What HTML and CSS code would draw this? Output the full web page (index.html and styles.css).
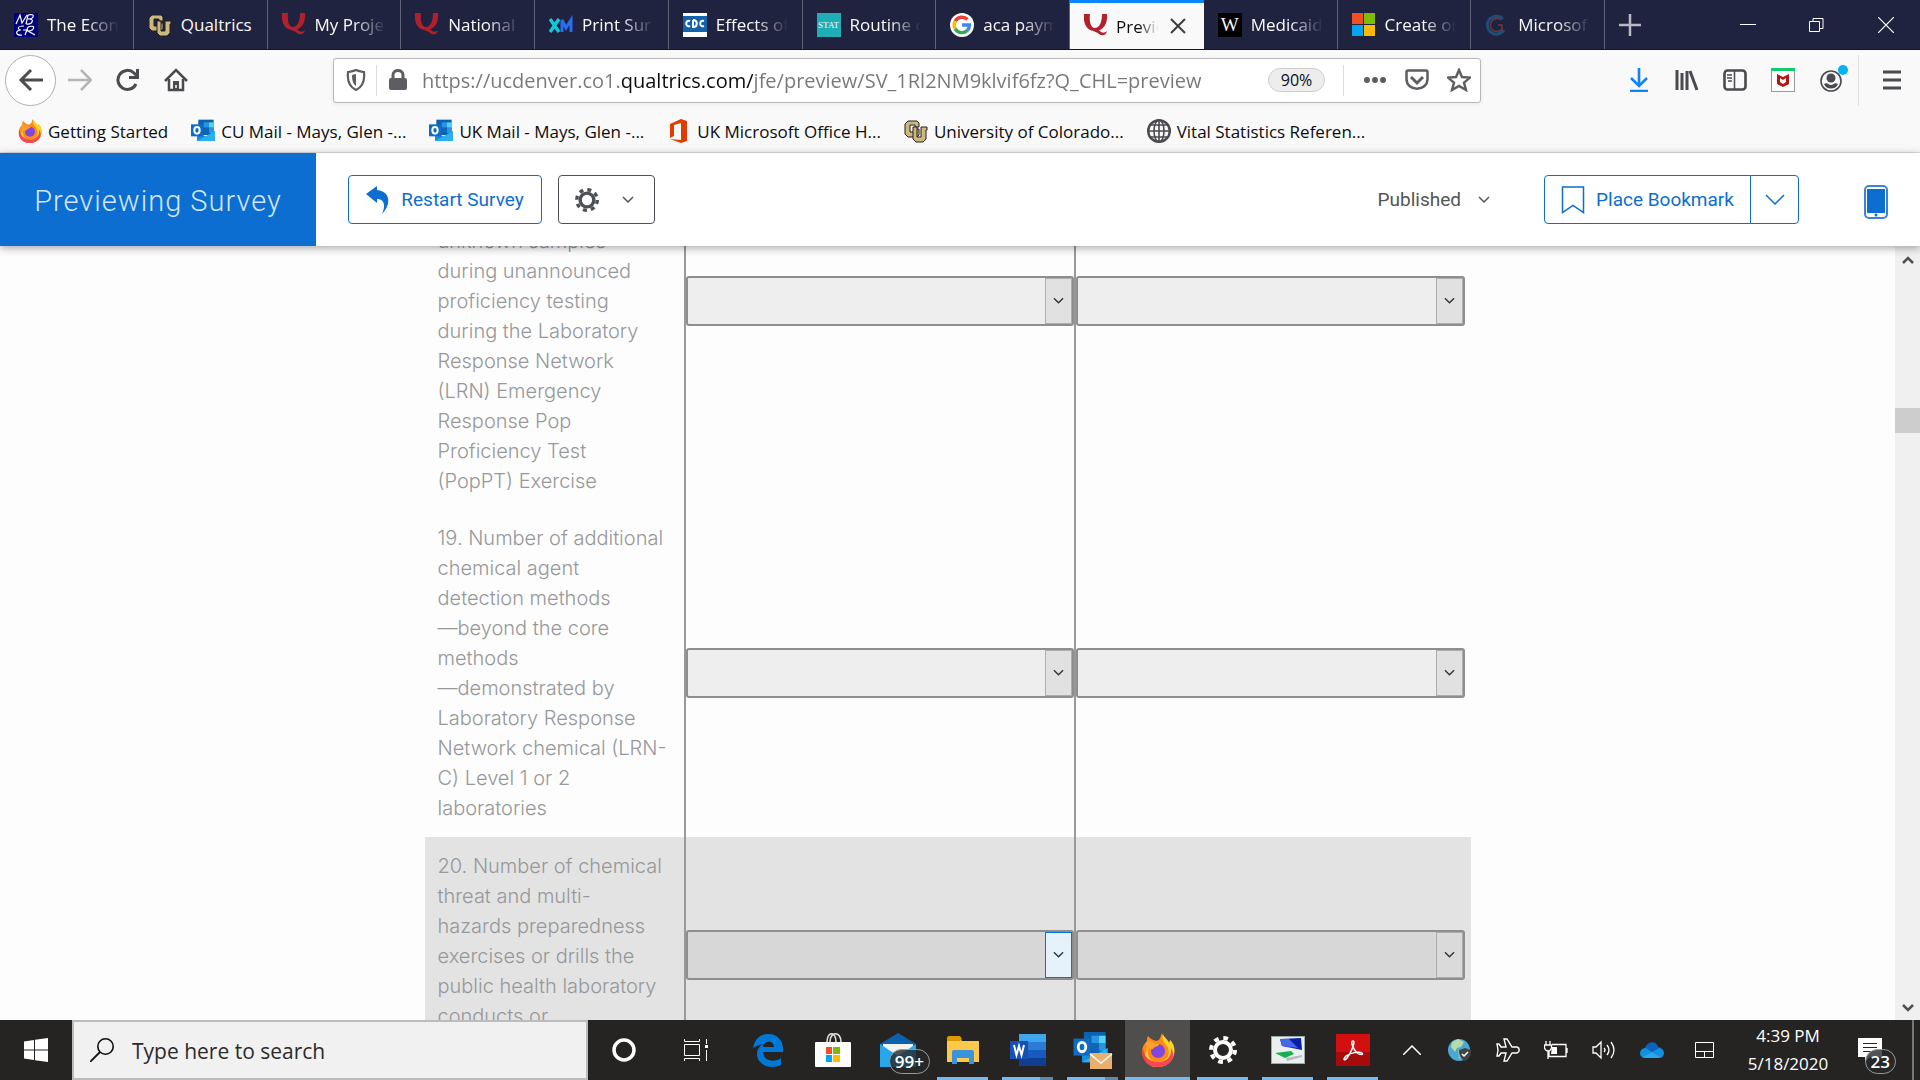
FILE: index.html
```
<!DOCTYPE html>
<html lang="en">
<head>
  <meta charset="UTF-8" />
  <meta name="viewport" content="width=device-width, initial-scale=1.0"/>
  <title>Preview - Online Survey Software</title>
  <link rel="stylesheet" href="styles.css">
</head>

<body>
  <!-- shared shapes -->
  <svg class="defs" aria-hidden="true">
    <symbol id="q-logo" viewBox="0 0 24 24">
      <path d="M0 0h6c-1 8 1 14 5 14s7-5 7-14h5c1 10-4 17-12 17S-1 10 0 0z" fill="#b2202c"/>
      <path d="M9 17c3-4 6-1 8 1 2 1 4 1 6-1-1 5-5 5-8 3-2-2-4-2-6-3z" fill="#b2202c"/>
    </symbol>
    <symbol id="cu-logo" viewBox="0 0 24 24">
      <path d="M4 2h9l2 2v4h-4V6H6v7h5v-3h4v6l-2 2H4l-3-3V5z" fill="#cfb87c" stroke="#222" stroke-width="1"/>
      <path d="M9 8h4v10h4V8h6v3h-1v9l-3 3h-7l-3-3z" fill="#cfb87c" stroke="#222" stroke-width="1"/>
    </symbol>
    <symbol id="outlook-logo" viewBox="0 0 36 36">
      <path d="M11 1h23v23H11z" fill="#0a63b0"/>
      <path d="M19 5h8v8h-8z" fill="#2896df"/><path d="M27 5h7v8h-7z" fill="#54d1fb"/>
      <path d="M19 13h8v8h-8z" fill="#1066b5"/><path d="M27 13h7v8h-7z" fill="#2896df"/>
      <path d="M9 18l14 9 13-9v15H9z" fill="#1a8cdc"/><path d="M9 33l27-15v15z" fill="#2bb0ee"/>
      <rect y="8" width="18" height="18" fill="#0f6cc6"/>
      <ellipse cx="9" cy="17" rx="4" ry="5" fill="none" stroke="#fff" stroke-width="3"/>
    </symbol>
    <symbol id="firefox-logo" viewBox="0 0 34 34">
      <path d="M21 0c-2 4-1 7-6 8-4-1-6-3-8-5-1 2-1 3-1 5-9 8-6 25 11 26 18-1 20-20 12-27l-1 4C28 6 22 5 21 0z" fill="#ff8a16"/>
      <path d="M22 1c-2 6 1 8 4 12 5 8-1 16-9 16-9 0-11-8-10-12-6 4-4 15 7 17 19 2 24-19 15-27l-1 4C28 7 23 5 22 1z" fill="#ffd32a"/>
      <path d="M2 15c1 9 7 14 15 14s14-5 13-14c6 9-1 19-13 19S-1 25 2 15z" fill="#f5245f" opacity=".8"/>
      <circle cx="17" cy="18" r="7" fill="#8046e0"/>
      <path d="M5 9c4-2 7 0 9 2h4c0 3-5 2-6 5-3 0-6 1-7 3z" fill="#ffa02a"/>
    </symbol>
    <symbol id="chevron" viewBox="0 0 12 8">
      <path d="M1 1l5 5 5-5" fill="none" stroke="currentColor" stroke-width="1.5"/>
    </symbol>
    <symbol id="gear" viewBox="0 0 28 28">
      <circle cx="14" cy="14" r="8" fill="none" stroke="currentColor" stroke-width="4"/>
      <circle cx="14" cy="14" r="12" fill="none" stroke="currentColor" stroke-width="4" stroke-dasharray="4.7 4.72"/>
    </symbol>
    <symbol id="globe" viewBox="0 0 24 24">
      <g fill="none" stroke="#4a4a4f" stroke-width="1.6"><circle cx="12" cy="12" r="10.8" stroke-width="2.4"/><ellipse cx="12" cy="12" rx="5" ry="11"/><path d="M12 1v22M1 12h22M3 6h18M3 18h18"/></g>
    </symbol>
  </svg>

  <header class="browser">
    <div class="tabs">
      <div class="tab-list" role="tablist">
        <button class="tab" role="tab"><svg class="fav" viewBox="0 0 24 24"><rect width="24" height="24" fill="#00007d"/><path d="M2 11L6 2l2 8 5-8M14 2l-2 9M14 2c8-2 6 4 0 4 7-1 5 6-2 5M10 13c-8 0-6 4-3 4-6 0-6 6 1 5M14 14l-3 8M14 14c9-3 6 4 0 4l7 4M9 17h5" fill="none" stroke="#fff" stroke-width="1.2"/></svg><span>The Econ</span></button>
        <button class="tab" role="tab"><svg class="fav"><use href="#cu-logo"/></svg><span class="whole">Qualtrics</span></button>
        <button class="tab" role="tab"><svg class="fav"><use href="#q-logo"/></svg><span>My Proje</span></button>
        <button class="tab" role="tab"><svg class="fav"><use href="#q-logo"/></svg><span>National</span></button>
        <button class="tab" role="tab"><svg class="fav" viewBox="0 0 24 24"><path d="M1 6l9 13M10 6L1 19" stroke="#12c9d6" stroke-width="3.4"/><path d="M13 19V7l4 8 5-8v12" fill="none" stroke="#2b6cf0" stroke-width="3"/></svg><span>Print Sur</span></button>
        <button class="tab" role="tab"><svg class="fav" viewBox="0 0 24 24"><rect width="24" height="24" fill="#fff"/><rect y="3" width="24" height="16" fill="#1463a8"/><path d="M7 8c-5-2-5 7 0 5M10 7v7c5 0 5-7 0-7M21 8c-5-2-5 7 0 5" fill="none" stroke="#fff" stroke-width="2"/></svg><span>Effects of</span></button>
        <button class="tab" role="tab"><i class="fav stat">STAT</i><span>Routine c</span></button>
        <button class="tab" role="tab"><svg class="fav" viewBox="0 0 24 24"><circle cx="12" cy="12" r="12" fill="#fff"/><g fill="none" stroke-width="3.4"><path d="M17.500 6.500A7.800 7.800 0 0 0 5.200 8.200" stroke="#ea4335"/><path d="M5.200 8.200a7.800 7.800 0 0 0 0 7.600" stroke="#fbbc05"/><path d="M5.200 15.800a7.800 7.800 0 0 0 12 1.800" stroke="#34a853"/><path d="M17.200 17.600A7.800 7.800 0 0 0 19.500 12H12" stroke="#4285f4"/></g></svg><span>aca paym</span></button>
        <button class="tab active" role="tab" aria-selected="true"><svg class="fav"><use href="#q-logo"/></svg><span>Previe</span><svg class="close" viewBox="0 0 16 16"><path d="M1 1l14 14M15 1L1 15" stroke="#3c3c40" stroke-width="2"/></svg></button>
        <button class="tab" role="tab"><i class="fav wiki">W</i><span>Medicaid</span></button>
        <button class="tab" role="tab"><svg class="fav" viewBox="0 0 24 24"><path d="M0 0h11v11H0z" fill="#f35022"/><path d="M12 0h11v11H12z" fill="#80bb03"/><path d="M0 12h11v11H0z" fill="#03a5f0"/><path d="M12 12h11v11H12z" fill="#ffb903"/></svg><span>Create or</span></button>
        <button class="tab" role="tab"><svg class="fav" viewBox="0 0 24 24"><path d="M18 6a9 9 0 1 0 1 11" fill="none" stroke="#1d4d79" stroke-width="3"/><path d="M16 7a6.500 6.500 0 1 0 1 9v-4h-4" fill="none" stroke="#733638" stroke-width="1.500"/></svg><span>Microsof</span></button>
      </div>
      <button class="new-tab" aria-label="New tab"><svg width="22" height="22" viewBox="0 0 22 22"><path d="M11 0v22M0 11h22" stroke="#b9b9c2" stroke-width="2.5"/></svg></button>
      <div class="window-buttons">
        <button aria-label="Minimize"><svg width="16" height="16"><path d="M0 7.500h16" stroke="#fff"/></svg></button>
        <button aria-label="Restore"><svg width="16" height="16" fill="none" stroke="#fff"><path d="M.5 4.500h10v10H.5zM4 4V1.500h10v10h-3"/></svg></button>
        <button aria-label="Close"><svg width="16" height="16"><path d="M0 0l16 16M16 0L0 16" stroke="#fff" stroke-width="1.200"/></svg></button>
      </div>
    </div>

    <div class="toolbar">
      <div class="nav-buttons">
        <button class="back" aria-label="Back"><svg width="26" height="24" viewBox="0 0 26 24"><path d="M25 12H3M13 2L3 12l10 10" fill="none" stroke="#4a4a4f" stroke-width="3"/></svg></button>
        <button aria-label="Forward"><svg width="24" height="22" viewBox="0 0 24 22"><path d="M0 11h22M13 1l10 10-10 10" fill="none" stroke="#b5b5b8" stroke-width="2.500"/></svg></button>
        <button aria-label="Reload"><svg width="24" height="24" viewBox="0 0 24 24"><path d="M20 16A9.500 9.500 0 1 1 18 5l3 3" fill="none" stroke="#4a4a4f" stroke-width="3"/><path d="M23 1v10H13V8h7V1z" fill="#4a4a4f"/></svg></button>
        <button aria-label="Home"><svg width="24" height="24" viewBox="0 0 24 24"><path d="M1 13L12 2l11 11M5 11v11h14V11" fill="none" stroke="#4a4a4f" stroke-width="2.500"/><path d="M9 13h6v9H9z" fill="#4a4a4f"/><path d="M12 17v3" stroke="#fff" stroke-width="1.500"/></svg></button>
      </div>
      <div class="url-bar">
        <svg width="20" height="22" viewBox="0 0 20 22"><path d="M10 1c3 1 5 2 8 2 1 9-2 15-8 18C4 18 1 12 2 3c3 0 5-1 8-2z" fill="none" stroke="#5e5e62" stroke-width="2.200"/><path d="M10 5l-4 1c0 5 1 9 4 11z" fill="#5e5e62"/></svg>
        <i class="bar"></i>
        <svg width="18" height="22" viewBox="0 0 18 22"><path d="M4 11V6c0-6 10-6 10 0v5" fill="none" stroke="#5e5e62" stroke-width="3"/><rect y="9" width="18" height="12" rx="2" fill="#5e5e62"/></svg>
        <input class="url" type="text" aria-label="Address" value="https://ucdenver.co1.qualtrics.com/jfe/preview/SV_1Rl2NM9klvif6fz?Q_CHL=preview">
        <button class="zoom">90%</button>
        <i class="bar"></i>
        <button aria-label="Page actions"><svg width="24" height="8"><g fill="#5e5e62"><circle cx="4" cy="4" r="3"/><circle cx="12" cy="4" r="3"/><circle cx="20" cy="4" r="3"/></g></svg></button>
        <button aria-label="Save to Pocket"><svg width="24" height="22" viewBox="0 0 24 22"><path d="M3 1.500h18q1.500 0 1.500 1.500v7c0 13-21 13-21 0V3q0-1.500 1.500-1.500z" fill="none" stroke="#5e5e62" stroke-width="2.500"/><path d="M6 8l6 6 6-6" fill="none" stroke="#5e5e62" stroke-width="3"/></svg></button>
        <button aria-label="Bookmark this page"><svg width="24" height="24" viewBox="0 0 24 24"><path d="M12 2l3 7 8 .6-6 5 2 7.400-7-4-7 4 2-7.400-6-5L9 9z" fill="none" stroke="#5e5e62" stroke-width="2.400"/></svg></button>
      </div>
      <div class="tools">
        <button aria-label="Downloads"><svg width="24" height="24" viewBox="0 0 24 24"><path d="M12 0v17M4 10l8 8 8-8M3 23h18" fill="none" stroke="#0a84ff" stroke-width="2.600"/></svg></button>
        <button aria-label="Library"><svg width="24" height="22" viewBox="0 0 24 22"><path d="M2 1v20M7 4v17M12 2v19M15 2l7 19" fill="none" stroke="#4a4a4f" stroke-width="3"/></svg></button>
        <button aria-label="Sidebars"><svg width="24" height="22" viewBox="0 0 24 22"><rect x="1.500" y="1.500" width="21" height="19" rx="3" fill="none" stroke="#4a4a4f" stroke-width="2.600"/><path d="M11.500 2v18M4 6h5M4 9h5M5 12h4" stroke="#4a4a4f" stroke-width="1.500"/></svg></button>
        <button aria-label="McAfee"><svg width="24" height="24" viewBox="0 0 24 24"><rect x=".5" y=".5" width="23" height="23" fill="#fff" stroke="#999"/><path d="M0 0h24v3H0z" fill="#12cc6c"/><path d="M6 6l6 3 6-3v10l-6 3-6-3z" fill="#b71414"/><path d="M9 10l3 2 3-2v4l-3 2-3-2z" fill="#fff"/></svg></button>
        <button aria-label="Account"><svg width="30" height="30" viewBox="0 0 30 30"><circle cx="12" cy="16" r="10" fill="none" stroke="#4a4a4f" stroke-width="1.600"/><circle cx="12" cy="13" r="4.500" fill="#4a4a4f"/><path d="M5 19c4-2 4 1 7 1s3-3 7-1c-2 6-12 6-14 0z" fill="#4a4a4f"/><circle cx="24" cy="5" r="5" fill="#00b3f4"/></svg></button>
        <i class="bar tall"></i>
        <button aria-label="Menu"><svg width="18" height="20"><path d="M0 2h18M0 10h18M0 18h18" stroke="#4a4a4f" stroke-width="3"/></svg></button>
      </div>
    </div>

    <nav class="bookmarks">
      <a href="#"><svg width="24" height="24"><use href="#firefox-logo"/></svg>Getting Started</a>
      <a href="#"><svg width="24" height="24"><use href="#outlook-logo"/></svg>CU Mail - Mays, Glen -...</a>
      <a href="#"><svg width="24" height="24"><use href="#outlook-logo"/></svg>UK Mail - Mays, Glen -...</a>
      <a href="#"><svg width="24" height="24" viewBox="0 0 24 24"><path d="M3 5l11-5 6 2v20l-6 2-11-4 11 1V4L7 6v11l-4 2z" fill="#e13b00"/></svg>UK Microsoft Office H...</a>
      <a href="#"><svg width="24" height="24"><use href="#cu-logo"/></svg>University of Colorado...</a>
      <a href="#"><svg width="24" height="24"><use href="#globe"/></svg>Vital Statistics Referen...</a>
    </nav>
  </header>

  <div class="preview-bar">
    <h1>Previewing Survey</h1>
    <button class="btn restart"><svg width="24" height="28" viewBox="0 0 24 28"><path d="M0 8l11-8v4c13 1 15 14 5 24 4-9 2-15-5-15v4z" fill="#0b6ed0"/></svg>Restart Survey</button>
    <button class="btn settings" aria-label="Settings"><svg width="24" height="24"><use href="#gear"/></svg><svg width="12" height="8"><use href="#chevron"/></svg></button>
    <button class="published">Published <svg width="12" height="8"><use href="#chevron"/></svg></button>
    <div class="bookmark-group">
      <button class="btn"><svg width="24" height="28" viewBox="0 0 24 28"><path d="M1.500 1h21v25.500L12 19.500 1.500 26.500z" fill="none" stroke="#0b6ed0" stroke-width="1.500"/></svg>Place Bookmark</button>
      <button class="btn drop" aria-label="Bookmarks"><svg width="20" height="12"><path d="M1 1l9 9 9-9" fill="none" stroke="#0b6ed0" stroke-width="1.500"/></svg></button>
    </div>
    <button class="phone" aria-label="Mobile view"><svg width="24" height="34" viewBox="0 0 24 34"><rect x="1" y="1" width="22" height="32" rx="4" fill="#fff" stroke="#3b82dc" stroke-width="2"/><path d="M3 4h18v24H3z" fill="#0b6ed0"/><circle cx="12" cy="30" r="1.500" fill="#0b6ed0"/></svg></button>
  </div>

  <main class="page">
    <div class="survey">
      <table class="matrix">
        <tr class="tall-row">
          <th scope="row">unknown samples<br>during unannounced<br>proficiency testing<br>during the Laboratory<br>Response Network<br>(LRN) Emergency<br>Response Pop<br>Proficiency Test<br>(PopPT) Exercise</th>
          <td><div class="pick"><select aria-label="Item 18, first answer"><option></option></select><svg><use href="#chevron"/></svg></div></td>
          <td><div class="pick"><select aria-label="Item 18, second answer"><option></option></select><svg><use href="#chevron"/></svg></div></td>
        </tr>
        <tr>
          <th scope="row">19. Number of additional<br>chemical agent<br>detection methods<br>—beyond the core<br>methods<br>—demonstrated by<br>Laboratory Response<br>Network chemical (LRN-<br>C) Level 1 or 2<br>laboratories</th>
          <td><div class="pick"><select aria-label="Item 19, first answer"><option></option></select><svg><use href="#chevron"/></svg></div></td>
          <td><div class="pick"><select aria-label="Item 19, second answer"><option></option></select><svg><use href="#chevron"/></svg></div></td>
        </tr>
        <tr class="current">
          <th scope="row">20. Number of chemical<br>threat and multi-<br>hazards preparedness<br>exercises or drills the<br>public health laboratory<br>conducts or</th>
          <td><div class="pick hot"><select aria-label="Item 20, first answer"><option></option></select><svg><use href="#chevron"/></svg></div></td>
          <td><div class="pick"><select aria-label="Item 20, second answer"><option></option></select><svg><use href="#chevron"/></svg></div></td>
        </tr>
      </table>
    </div>
    <div class="scrollbar">
      <svg width="12" height="10"><path d="M1 8l5-5 5 5" fill="none" stroke="#505050" stroke-width="2.500"/></svg>
      <i></i>
      <svg class="down" width="12" height="10"><path d="M1 2l5 5 5-5" fill="none" stroke="#505050" stroke-width="2.500"/></svg>
    </div>
  </main>

  <footer class="taskbar">
    <button class="start" aria-label="Start"><svg width="24" height="24" viewBox="0 0 24 24" fill="#fff"><path d="M0 3.500l10-1.500v9.500H0zM11 1.800L24 0v11.500H11zM0 12.500h10V22L0 20.500zM11 12.500h13V24l-13-1.800z"/></svg></button>
    <label class="search">
      <svg width="24" height="24" viewBox="0 0 24 24"><circle cx="15.500" cy="8.500" r="7.700" fill="none" stroke="#111" stroke-width="1.600"/><path d="M10 14L0 24" stroke="#111" stroke-width="1.800"/></svg>
      <input type="text" aria-label="Search" placeholder="Type here to search">
    </label>
    <div class="sys">
      <button aria-label="Cortana"><svg width="24" height="24"><circle cx="12" cy="12" r="10" fill="none" stroke="#fff" stroke-width="3.500"/></svg></button>
      <button aria-label="Task View"><svg width="24" height="24" fill="none" stroke="#fff"><path d="M.5 6.500h15v11H.5zM.5 1v2.500h15V1M.5 23v-2.500h15V23M22.500 1v5M22.500 12v11"/><path d="M21 7h3v3h-3z" fill="#fff" stroke="none"/></svg></button>
    </div>
    <div class="apps">
      <button aria-label="Edge"><svg width="32" height="34" viewBox="0 0 32 34"><path d="M1 15C3 5 9 1 16 1c9 0 15 6 15 15v3H11c0 9 12 11 18 6v7c-10 5-24 0-24-11 0-5 3-8 6-10-4 1-7 2-10 4zm10-1h11c0-7-10-7-11 0z" fill="#0078d7"/></svg></button>
      <button aria-label="Microsoft Store"><svg width="36" height="34" viewBox="0 0 36 34"><path d="M12 9C12-2 21-2 21 9M15 9c0-11 11-11 11 0" fill="none" stroke="#ddd" stroke-width="1.600"/><rect y="9" width="36" height="25" rx="1" fill="#fff"/><path d="M11 14h6v7h-6z" fill="#f35022"/><path d="M18 14h7v7h-7z" fill="#80bb03"/><path d="M11 22h6v7h-6z" fill="#03a5f0"/><path d="M18 22h7v7h-7z" fill="#ffb903"/></svg></button>
      <button class="mail" aria-label="Mail"><svg width="36" height="34" viewBox="0 0 36 34"><path d="M0 11L18 0l18 11v5H0z" fill="#0c60ae"/><path d="M3 11h30v12H3z" fill="#f2f2f2"/><path d="M0 11l18 12L36 11v23H0z" fill="#28a8ea"/></svg><b class="badge">99+</b></button>
      <button class="open" aria-label="File Explorer"><svg width="32" height="28" viewBox="0 0 32 28"><path d="M0 2h13l2 3h17v21H0z" fill="#fdc94a"/><path d="M0 2q0-2 2-2h11l2 3-2 2H0z" fill="#dc9a00"/><path d="M5 28V16q0-2 2-2h18q2 0 2 2v12h-5v-6H10v6z" fill="#3b93dc"/></svg></button>
      <button class="open many" aria-label="Word"><svg width="36" height="32" viewBox="0 0 36 32"><path d="M9 0h27v8H9z" fill="#41a5ee"/><path d="M9 8h27v8H9z" fill="#2b7cd3"/><path d="M9 16h27v8H9z" fill="#185abd"/><path d="M9 24h27v8H9z" fill="#103f91"/><rect y="7" width="18" height="18" fill="#1650b5"/><path d="M4 11l2.500 10L9 12l2.500 9L14 11" fill="none" stroke="#fff" stroke-width="2"/></svg></button>
      <button class="open many" aria-label="Outlook"><svg width="40" height="38" viewBox="0 0 40 38"><use href="#outlook-logo" width="35" height="34"/><path d="M17 22h22v16H17z" fill="#e8b06c"/><path d="M17 23l11 9 11-9" fill="none" stroke="#fff" stroke-width="1.500"/></svg></button>
      <button class="open focused" aria-label="Firefox"><svg width="34" height="34"><use href="#firefox-logo"/></svg></button>
      <button class="open" aria-label="Settings"><svg width="28" height="28" color="#fff"><use href="#gear"/></svg></button>
      <button class="open" aria-label="Remote desktop"><svg width="34" height="28" viewBox="0 0 34 28"><rect x=".5" y=".5" width="33" height="27" fill="#eceff0" stroke="#9aa"/><path d="M9 3l21-1 1 12-20-4z" fill="#0a1eac"/><path d="M9 3h9l9 9-16-2z" fill="#4468e6"/><path d="M4 17l16-2 3 3-9 4z" fill="#17b04e"/><path d="M15 22l16-3v2l-15 4z" fill="#b5bdc0"/></svg></button>
      <button class="open" aria-label="Acrobat Reader"><svg width="34" height="32" viewBox="0 0 34 32"><rect width="34" height="32" fill="#d30f0f"/><path d="M0 18h34v14H0z" fill="#a50b0b"/><path d="M17 7c-3 0 0 8 4 12 3 2 7 2 5 0-3-2-12 0-16 3-4 4-1 5 1 2 4-5 9-17 6-17z" fill="none" stroke="#fff" stroke-width="1.500"/></svg></button>
    </div>
    <div class="tray">
      <button aria-label="Show hidden icons"><svg width="18" height="10"><path d="M0 10l9-9 9 9" fill="none" stroke="#fff" stroke-width="1.500"/></svg></button>
      <button aria-label="Security"><svg width="24" height="24" viewBox="0 0 24 24"><circle cx="11" cy="12" r="11" fill="#4aa9d2"/><path d="M4 4l6-3 6 3-3 5-4 1-2 4-4-5z" fill="#b4dda9"/><path d="M10 12l6-1v8l-5 2z" fill="#91c9a8"/><path d="M11 12l6-2 6 2c0 6-2 9-6 11-4-2-6-5-6-11z" fill="#414447"/><path d="M14 16l2 2 4-4" fill="none" stroke="#fff" stroke-width="1.500"/></svg></button>
      <button aria-label="Airplane mode"><svg width="24" height="24" viewBox="0 0 24 24"><path d="M8 1h3l5 8h5c3 1 3 5 0 6h-5l-5 8H8l2-8H5l-2 3H1l1-6-1-6h2l2 3h5z" fill="none" stroke="#fff" stroke-width="1.400"/></svg></button>
      <button aria-label="Battery"><svg width="24" height="18" viewBox="0 0 24 18"><path d="M8 3.500h14v12H5v-5M23 7v5M2 0v4M6 0v4M.5 4h7v3q-1 3-3.500 3T.5 7zM4 10v8" fill="none" stroke="#fff" stroke-width="1.300"/><path d="M8 6h5v7H7z" fill="#fff"/></svg></button>
      <button aria-label="Volume"><svg width="24" height="20" viewBox="0 0 24 20"><path d="M1 7h3l5-5v16l-5-5H1zM12 8q2 2 0 4M15 5q4 5 0 10M19 2q6 8 0 16" fill="none" stroke="#fff" stroke-width="1.300"/></svg></button>
      <button aria-label="OneDrive"><svg width="24" height="16" viewBox="0 0 24 16"><path d="M5 6C8-2 17-1 18 5c8 1 7 11 1 11H5C-1 16-2 7 5 6z" fill="#0a63bd"/><path d="M5 16c-7 0-6-10 1-10l6 4 7-4c7 1 6 10 0 10z" fill="#1490df"/><path d="M3 15l9-5 8 5-2 1H5z" fill="#28a8ea"/></svg></button>
      <button class="pad" aria-label="Touchpad"><svg width="20" height="18"><path d="M.5 1.500h18v15H.5zM.5 10.500h18M9.500 10.500v6" fill="none" stroke="#fff"/></svg></button>
      <div class="clock"><span>4:39 PM</span><span>5/18/2020</span></div>
      <button class="notes" aria-label="Notifications"><svg width="24" height="24" viewBox="0 0 24 24"><path d="M0 0h24v19H12l-5 5v-5H0z" fill="#fff"/><path d="M5 5.500h14M5 9.500h14M5 13.500h9" stroke="#262422"/></svg><b class="badge">23</b></button>
      <i class="show-desktop"></i>
    </div>
  </footer>
</body>
</html>
```
FILE: styles.css
```
* {
  box-sizing: border-box;
}

body {
  margin: 0;
  height: 100vh;
  display: flex;
  flex-direction: column;
  overflow: hidden;
  font-family: "Open Sans", "Noto Sans", sans-serif;
  font-size: 17px;
  color: #0c0c0d;
  background: #fdfdfd;
}

button {
  display: flex;
  align-items: center;
  justify-content: center;
  padding: 0;
  border: none;
  background: none;
  font: inherit;
  color: inherit;
  white-space: nowrap;
}

svg {
  display: block;
  flex: none;
}

.defs {
  position: absolute;
  width: 0;
  height: 0;
}

/* browser window */

.browser {
  background: #f9f9fa;
  border-bottom: 1px solid #dcdcde;
}

.tabs {
  display: flex;
  height: 50px;
  background: #202340;
  border-bottom: 1px solid #111330;
  color: #f9f9fa;
}

.tab-list {
  display: grid;
  grid-template-columns: repeat(12, minmax(0, 1fr));
  flex: 0 1 1605px;
  min-width: 0;
}

.tab {
  justify-content: flex-start;
  gap: 9px;
  padding: 0 8px 0 14px;
  border-right: 1px solid #62647a;
}

/* long titles fade out */
.tab span {
  flex: 1;
  min-width: 0;
  overflow: hidden;
  text-align: left;
  -webkit-mask-image: linear-gradient(90deg, #000 50%, transparent 92%);
  mask-image: linear-gradient(90deg, #000 50%, transparent 92%);
}

.tab .whole {
  -webkit-mask-image: none;
  mask-image: none;
}

.tab.active {
  padding-right: 18px;
  gap: 8px;
  background: #f9f9fa;
  border-top: 3px solid #0a84ff;
  border-right: none;
  color: #0c0c0d;
}

.fav {
  flex: none;
  width: 24px;
  height: 24px;
}

.stat,
.wiki {
  display: flex;
  align-items: center;
  justify-content: center;
  font-family: "Liberation Serif", serif;
  font-style: normal;
  font-size: 9px;
  background: #1faeb5;
}

.wiki {
  font-size: 19px;
  background: #000;
}

.close {
  width: 16px;
  height: 16px;
}

.new-tab {
  width: 50px;
}

.window-buttons {
  display: flex;
  margin-left: auto;
}

.window-buttons button {
  width: 69px;
}

.toolbar {
  display: flex;
  align-items: center;
  height: 60px;
  padding: 0 19px 0 5px;
}

.nav-buttons {
  display: flex;
  align-items: center;
  flex: 1 1 328px;
}

.nav-buttons button {
  width: 48px;
  height: 48px;
}

.nav-buttons .back {
  width: 51px;
  height: 51px;
  border: 1px solid #b0b0b3;
  border-radius: 50%;
  background: #fff;
}

.url-bar {
  display: flex;
  align-items: center;
  flex: 1 1 1148px;
  height: 45px;
  padding: 0 9px 0 12px;
  border: 1px solid #b8b8ba;
  border-radius: 3px;
  background: #fff;
  box-shadow: 0 1px 4px rgba(0, 0, 0, 0.08);
}

.url-bar button {
  margin-left: 18px;
}

.bar {
  width: 1px;
  height: 31px;
  margin: 0 12px 0 10px;
  background: #dedee0;
}

.url-bar .zoom + .bar {
  margin: 0 1px 0 18px;
}

.url {
  flex: 1;
  min-width: 0;
  margin-left: 15px;
  padding: 0;
  border: none;
  font: inherit;
  font-size: 20px;
  outline: none;
  /* greys out everything but the domain */
  background: linear-gradient(90deg, #77777b 199px, #0c0c0d 199px, #0c0c0d 331px, #77777b 331px);
  -webkit-background-clip: text;
  background-clip: text;
  -webkit-text-fill-color: transparent;
}

.url-bar .zoom {
  width: 57px;
  height: 24px;
  margin: 0;
  border: 1px solid #cfcfd1;
  border-radius: 12px;
  background: #ededee;
  font-size: 16px;
}

.tools {
  display: flex;
  align-items: center;
  justify-content: flex-end;
  flex: 1 1 420px;
}

.tools button + button {
  margin-left: 24px;
}

.bar.tall {
  height: 51px;
  margin: 0 24px 0 9px;
}

.bookmarks {
  display: flex;
  align-items: center;
  gap: 23px;
  height: 42px;
  padding: 0 18px;
}

.bookmarks a {
  display: flex;
  align-items: center;
  gap: 6px;
  color: inherit;
  text-decoration: none;
  white-space: nowrap;
}

/* survey preview */

.preview-bar {
  position: relative;
  z-index: 1;
  display: flex;
  align-items: center;
  height: 93px;
  padding-right: 32px;
  background: #fff;
  box-shadow: 0 2px 8px rgba(0, 0, 0, 0.35);
  color: #0b6ed0;
  font-family: Roboto, sans-serif;
  font-size: 19px;
}

.preview-bar h1 {
  display: flex;
  align-items: center;
  justify-content: center;
  align-self: stretch;
  width: 316px;
  margin: 0 32px 0 0;
  padding-top: 2px;
  background: #0b6ed0;
  color: #d3e5f8;
  font-size: 29px;
  font-weight: 300;
  letter-spacing: 1px;
}

.btn {
  gap: 11px;
  height: 49px;
  padding: 0 16px;
  border: 1px solid #0b6ed0;
  border-radius: 4px;
  background: #fff;
}

.restart {
  width: 194px;
  margin-right: 16px;
}

.settings {
  justify-content: flex-start;
  gap: 23px;
  width: 97px;
  border-color: #4d5156;
  color: #4d5156;
}

.published {
  gap: 17px;
  margin-left: auto;
  color: #525559;
}

.bookmark-group {
  display: flex;
  margin: 0 65px 0 54px;
}

.bookmark-group .btn {
  width: 207px;
  border-radius: 4px 0 0 4px;
}

.bookmark-group .drop {
  width: 49px;
  margin-left: -1px;
  padding: 0;
  border-radius: 0 4px 4px 0;
}

.phone {
  padding-top: 4px;
}

.page {
  display: flex;
  flex: 1;
  min-height: 0;
}

.survey {
  flex: 1;
  overflow: hidden;
}

/* the pane is scrolled part way into the first row */
.matrix {
  width: 1046px;
  margin: -153px auto 0;
  border-collapse: collapse;
  table-layout: fixed;
}

.matrix th {
  width: 260px;
  padding: 14px 0 14px 13px;
  color: #96989a;
  font-family: Inter, sans-serif;
  font-size: 20px;
  font-weight: 300;
  line-height: 30px;
  text-align: left;
  white-space: nowrap;
}

.matrix td {
  width: 390px;
  padding: 0;
  border-left: 2px solid #999;
}

.matrix td:last-child {
  width: 396px;
  padding-right: 6px;
}

.tall-row {
  height: 416px;
}

.tall-row th {
  padding-bottom: 13px;
  vertical-align: bottom;
}

.current {
  height: 236px;
  background: #e3e3e3;
}

.current th {
  vertical-align: top;
}

.pick {
  position: relative;
}

.pick select {
  display: block;
  width: 100%;
  height: 50px;
  border: 2px solid #8e8e8e;
  border-radius: 3px;
  background: #eee;
  appearance: none;
}

.pick svg {
  position: absolute;
  top: 2px;
  right: 2px;
  width: 27px;
  height: 46px;
  padding: 0 7px;
  border: 1px solid #adadad;
  background: #e1e1e1;
  color: #333;
  pointer-events: none;
}

.current .pick select {
  background: #d7d7d7;
}

.current .pick svg {
  background: #dadada;
}

.current .pick.hot svg {
  border-color: #0078d7;
  background: #e5f1fb;
}

.scrollbar {
  display: flex;
  flex-direction: column;
  align-items: center;
  width: 25px;
  padding: 9px 0 7px;
  background: #f0f0f0;
}

.scrollbar i {
  width: 25px;
  height: 25px;
  margin-top: 143px;
  background: #cdcdcd;
}

.scrollbar .down {
  margin-top: auto;
}

/* taskbar */

.taskbar {
  display: flex;
  height: 60px;
  background: #262422;
  color: #fff;
}

.start {
  width: 72px;
}

.search {
  display: flex;
  align-items: center;
  gap: 18px;
  width: 516px;
  padding: 0 16px;
  border: 2px solid #bcbcbc;
  background: #f1f1f1;
}

.search input {
  flex: 1;
  min-width: 0;
  padding: 2px 0 0;
  border: none;
  background: none;
  font: inherit;
  font-size: 21px;
}

.search input::placeholder {
  color: #2b2b2b;
}

.sys,
.apps,
.tray {
  display: flex;
}

.sys {
  margin-right: 3px;
}

.sys button {
  width: 72px;
}

.apps button {
  position: relative;
  width: 65px;
}

.apps .open::after {
  content: "";
  position: absolute;
  left: 7px;
  right: 7px;
  bottom: 0;
  height: 3px;
  background: #76b9ed;
}

.apps .many::after {
  background: linear-gradient(90deg, #76b9ed 38px, #5b8ab0 38px);
}

.apps .focused {
  background: #504e4c;
}

.apps .focused::after {
  left: 0;
  right: 0;
}

.badge {
  position: absolute;
  right: 0;
  bottom: 6px;
  min-width: 30px;
  height: 25px;
  padding: 0 5px;
  border: 1px solid #999;
  border-radius: 13px;
  background: rgba(38, 40, 42, 0.8);
  font-size: 17px;
  font-weight: 600;
  line-height: 23px;
}

.notes .badge {
  right: 2px;
}

.tray {
  margin-left: auto;
}

.tray button {
  width: 48px;
}

.tray .pad {
  width: 58px;
}

.clock {
  display: flex;
  flex-direction: column;
  align-items: center;
  justify-content: center;
  width: 108px;
  font-size: 17px;
  line-height: 28px;
}

.tray .notes {
  position: relative;
  width: 56px;
}

.show-desktop {
  width: 8px;
  margin-left: 14px;
  border-left: 2px solid #777;
}
```
